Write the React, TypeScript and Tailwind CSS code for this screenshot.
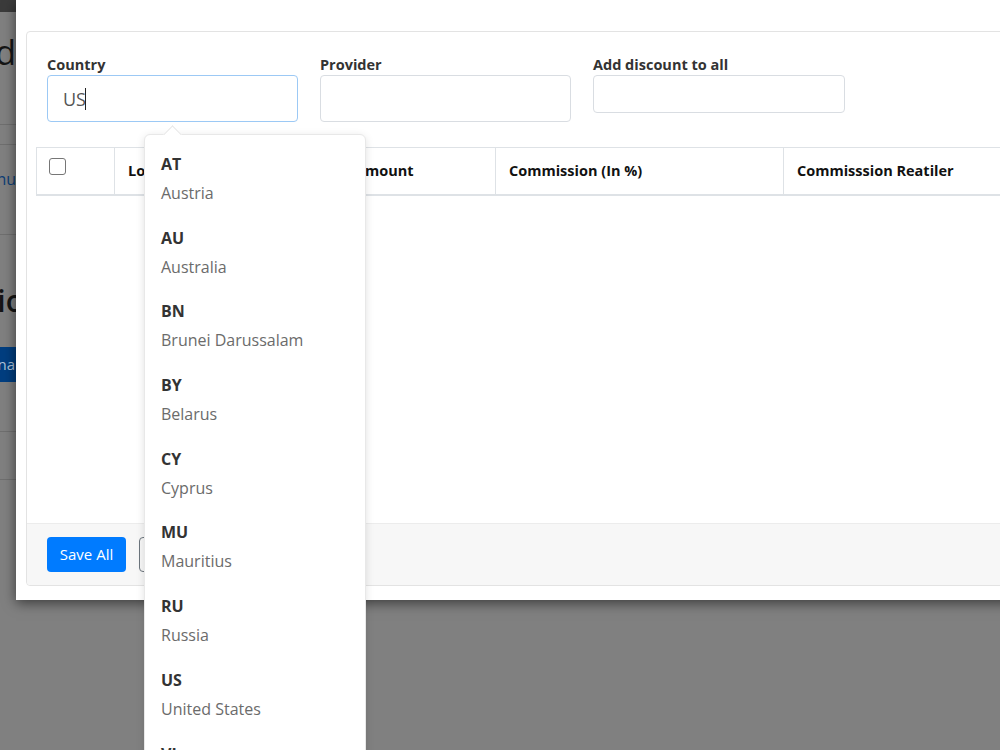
const countries: [string, string][] = [
  ['AT', 'Austria'],
  ['AU', 'Australia'],
  ['BN', 'Brunei Darussalam'],
  ['BY', 'Belarus'],
  ['CY', 'Cyprus'],
  ['MU', 'Mauritius'],
  ['RU', 'Russia'],
  ['US', 'United States'],
  ['VI', 'Virgin Islands, U.S.'],
];

function Field({ label, width, height, children, focused }: { label: string; width: string; height: string; children?: React.ReactNode; focused?: boolean }) {
  return (
    <div className={width}>
      <p className="text-[14.5px] leading-[20px] font-bold text-[#333]">{label}</p>
      <div className={`${height} w-full rounded-[4px] border ${focused ? 'border-[#9cc9f5]' : 'border-[#d9dde2]'} flex items-center px-[15px] bg-white`}>
        {children}
      </div>
    </div>
  );
}

export default function App() {
  return (
    <div className="relative w-[1000px] h-[750px] overflow-hidden bg-[#808080] font-['Open_Sans',sans-serif]">
      {/* page behind the backdrop, only a sliver is visible */}
      <div className="w-[16px] flex flex-col">
        <div className="h-[12px] bg-[#3b3b3b]" />
        <div className="h-[112px] flex justify-end items-start pt-[20px] overflow-hidden">
          <span className="text-[34px] leading-[40px] text-[#151515] whitespace-nowrap">Standard</span>
        </div>
        <div className="h-[1px] bg-[#6f6f6f]" />
        <div className="h-[19px]" />
        <div className="h-[1px] bg-[#6f6f6f]" />
        <div className="h-[89px] flex justify-end items-start pt-[22px] overflow-hidden">
          <span className="text-[16px] leading-[24px] text-[#0d3e75] whitespace-nowrap">Menu</span>
        </div>
        <div className="h-[1px] bg-[#6f6f6f]" />
        <div className="h-[196px] flex flex-col overflow-hidden">
          <div className="flex justify-end pt-[46px] h-[112px]">
            <span className="text-[30px] leading-[40px] font-semibold text-[#151515] whitespace-nowrap mr-[-8px]">Sectio</span>
          </div>
          <div className="flex justify-end">
            <span className="h-[35px] bg-[#003e80] text-[#b0c4da] text-[15px] leading-[35px] pl-3 pr-[1px] whitespace-nowrap">Additiona</span>
          </div>
        </div>
        <div className="h-[1px] bg-[#6f6f6f]" />
        <div className="h-[47px]" />
        <div className="h-[1px] bg-[#6f6f6f]" />
      </div>

      {/* modal */}
      <div className="absolute left-[16px] top-0 w-[1000px] h-[600px] bg-white shadow-[0_3px_12px_rgba(0,0,0,0.55)] pt-[31px] pl-[10px]">
        <div className="h-[555px] border border-[#e3e3e3] rounded-[4px] flex flex-col">
          <div className="pt-[23px] pl-[20px] flex gap-[22px] items-start">
            <Field label="Country" width="w-[251px]" height="h-[47px]" focused>
              <span className="text-[18px] text-[#555] leading-none">US</span>
              <span className="w-[1px] h-[22px] bg-[#222] ml-[-1px]" />
            </Field>
            <Field label="Provider" width="w-[251px]" height="h-[47px]" />
            <Field label="Add discount to all" width="w-[252px]" height="h-[38px]" />
          </div>

          <div className="mt-[25px] ml-[9px] w-[1000px] border-t border-l border-[#dee2e6]">
            <div className="flex h-[48px] border-b-2 border-[#dee2e6] text-[14.5px] font-bold text-[#111]">
              <div className="w-[77px] flex items-start pt-[10px] pl-[12px]">
                <span className="w-[17px] h-[17px] rounded-[3px] border border-[#767676] bg-white" />
              </div>
              <div className="w-[227px] border-l border-[#dee2e6] flex items-center pl-[13px]">Location</div>
              <div className="w-[154px] border-l border-[#dee2e6] flex items-center pl-[13px]">Amount</div>
              <div className="w-[288px] border-l border-[#dee2e6] flex items-center pl-[13px]">Commission (In %)</div>
              <div className="flex-1 border-l border-[#dee2e6] flex items-center pl-[13px]">Commisssion Reatiler</div>
            </div>
          </div>

          <div className="mt-auto h-[62px] bg-[#f7f7f7] border-t border-[#ececec] rounded-b-[4px] flex items-start pt-[13px] pl-[20px] gap-[13px]">
            <button className="w-[79px] h-[35px] rounded-[4px] bg-[#007bff] text-white text-[15px]">Save All</button>
            <button className="h-[35px] rounded-[4px] border border-[#6c757d] text-[#6c757d] text-[15px] px-3">Cancel</button>
          </div>
        </div>
      </div>

      {/* autocomplete dropdown */}
      <div className="absolute left-[144px] top-[134px] w-[222px] h-[640px] bg-white border border-[#e8e8e8] rounded-t-[6px] shadow-[0_2px_8px_rgba(0,0,0,0.12)]">
        <div className="absolute left-[21px] top-[-7px] w-[13px] h-[13px] rotate-45 bg-white border-l border-t border-[#e8e8e8]" />
        <div className="relative pt-[8px] overflow-hidden h-full">
          {countries.map(([code, name]) => (
            <div key={code} className="h-[73.7px] pt-[9px] pl-[16px]">
              <p className="text-[16px] leading-[24px] font-bold text-[#333]">{code}</p>
              <p className="mt-[5px] text-[16px] leading-[24px] text-[#6b6b6b] whitespace-nowrap">{name}</p>
            </div>
          ))}
        </div>
      </div>
    </div>
  );
}
